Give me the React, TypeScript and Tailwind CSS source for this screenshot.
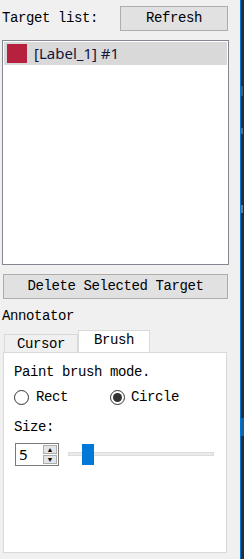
import React from "react";

const mono = "font-['SimSun','Liberation_Mono','DejaVu_Sans_Mono',monospace] text-[14px] tracking-[-0.4px] text-black";

export default function App() {
  return (
    <div className="flex h-[559px] w-[244px] overflow-hidden bg-[#f0f0f0]">
      {/* 主面板 */}
      <div className="flex w-[240px] flex-col">
        {/* 标题行 */}
        <div className="flex h-[40px] items-start pt-[6px]">
          <div className={`${mono} ml-[2px] mt-[4px] w-[118px] leading-[16px]`}>Target list:</div>
          <button className={`${mono} h-[25px] w-[108px] border border-[#adadad] bg-[#e1e1e1] leading-[23px]`}>
            Refresh
          </button>
        </div>

        {/* 目标列表 */}
        <div className="ml-[2px] h-[225px] w-[227px] border border-[#828790] bg-white p-[1px]">
          <div className="flex h-[23px] items-center bg-[#d9d9d9] pl-[3px]">
            <div className="h-[19px] w-[20px] bg-[#b5213f]" />
            <span className="ml-[7px] font-['Noto_Sans','Liberation_Sans',sans-serif] text-[15px] leading-[23px] text-[#14143c]">
              [Label_1] #1
            </span>
          </div>
        </div>

        <button className={`${mono} ml-[3px] mt-[9px] h-[25px] w-[225px] border border-[#adadad] bg-[#e1e1e1] leading-[23px]`}>
          Delete Selected Target
        </button>

        <div className={`${mono} ml-[2px] mt-[9px] h-[22px] leading-[16px]`}>Annotator</div>

        {/* 标签页 */}
        <div className="ml-[3px] flex h-[22px] items-end">
          <div className={`${mono} ml-[1px] h-[18px] w-[74px] border border-b-0 border-[#d9d9d9] bg-[#f0f0f0] text-center leading-[18px]`}>
            Cursor
          </div>
          <div className={`${mono} -mb-[1px] h-[23px] w-[72px] border border-b-0 border-[#d9d9d9] bg-white text-center leading-[18px]`}>
            Brush
          </div>
        </div>

        <div className="relative ml-[3px] h-[201px] w-[224px] border border-[#d9d9d9] bg-white pl-[10px] pt-[11px]">
          <div className={`${mono} leading-[16px]`}>Paint brush mode.</div>

          <div className="mt-[7px] flex h-[20px] items-center">
            <Radio />
            <span className={`${mono} ml-[7px] w-[74px]`}>Rect</span>
            <Radio checked />
            <span className={`${mono} ml-[6px]`}>Circle</span>
          </div>

          <div className={`${mono} mt-[12px] leading-[16px]`}>Size:</div>

          <div className="mt-[8px] flex items-center">
            {/* 数字输入框 */}
            <div className="ml-[1px] flex h-[23px] w-[44px] border border-[#7a7a7a] bg-white">
              <span className="flex-1 pl-[3px] font-['Noto_Sans','Liberation_Sans',sans-serif] text-[15px] leading-[21px]">5</span>
              <div className="flex w-[16px] flex-col gap-[1px] p-[1px]">
                <div className="flex flex-1 items-center justify-center border border-[#adadad] bg-[#e5e5e5] text-[7px] leading-none">▲</div>
                <div className="flex flex-1 items-center justify-center border border-[#adadad] bg-[#e5e5e5] text-[7px] leading-none">▼</div>
              </div>
            </div>
            {/* 滑块 */}
            <div className="relative ml-[9px] h-[22px] w-[146px]">
              <div className="absolute left-0 right-0 top-[8px] h-[4px] border border-[#dcdcdc] bg-[#ebebeb]" />
              <div className="absolute left-[14px] top-0 h-[21px] w-[12px] bg-[#0078d7]" />
            </div>
          </div>
        </div>
      </div>

      {/* 右侧边缘 */}
      <div className="w-[1px] bg-[#0078d7]" />
      <div className="relative w-[3px] bg-[#2b2b2b]">
        <div className="absolute left-0 top-[86px] h-[10px] w-[2px] bg-[#555]" />
        <div className="absolute left-0 top-[128px] h-[6px] w-[2px] bg-[#666]" />
        <div className="absolute left-0 top-[205px] h-[8px] w-[2px] bg-[#777]" />
        <div className="absolute left-0 top-[418px] h-[18px] w-[3px] bg-[#1e5f99]" />
      </div>
    </div>
  );
}

function Radio({ checked = false }: { checked?: boolean }) {
  return (
    <div className="flex h-[15px] w-[15px] items-center justify-center rounded-full border border-[#333] bg-white">
      {checked && <div className="h-[9px] w-[9px] rounded-full bg-[#333]" />}
    </div>
  );
}
